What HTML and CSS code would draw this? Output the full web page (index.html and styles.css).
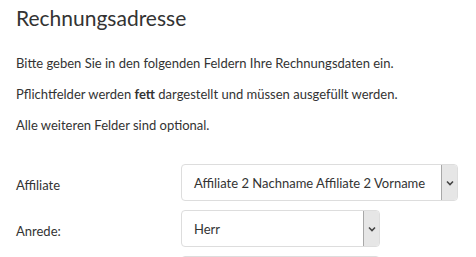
FILE: index.html
```html
<!DOCTYPE html>
<html lang="de">
<head>
<meta charset="utf-8">
<link rel="stylesheet" href="styles.css">
</head>
<body>
<div class="page">
  <h1 class="title">Rechnungsadresse</h1>
  <p class="info">Bitte geben Sie in den folgenden Feldern Ihre Rechnungsdaten ein.</p>
  <p class="info">Pflichtfelder werden <b>fett</b> dargestellt und müssen ausgefüllt werden.</p>
  <p class="info">Alle weiteren Felder sind optional.</p>
  <div class="form">
    <div class="row">
      <label class="label">Affiliate</label>
      <div class="select wide">
        <span class="value">Affiliate 2 Nachname Affiliate 2 Vorname</span>
        <span class="arrow"><svg width="8" height="6" viewBox="0 0 8 6"><polyline points="1,1.5 4,4.5 7,1.5" fill="none" stroke="#444" stroke-width="1.6"/></svg></span>
      </div>
    </div>
    <div class="row">
      <label class="label">Anrede:</label>
      <div class="select narrow">
        <span class="value">Herr</span>
        <span class="arrow"><svg width="8" height="6" viewBox="0 0 8 6"><polyline points="1,1.5 4,4.5 7,1.5" fill="none" stroke="#444" stroke-width="1.6"/></svg></span>
      </div>
    </div>
    <div class="row">
      <label class="label"></label>
      <div class="select narrow"></div>
    </div>
  </div>
</div>
</body>
</html>
```
FILE: styles.css
```css
html, body {
  margin: 0;
  padding: 0;
  background: #fff;
  overflow: hidden;
}
body {
  font-family: Lato, "Open Sans", sans-serif;
  color: #333;
}
.page {
  padding: 0 0 0 16px;
}
.title {
  font-size: 21px;
  font-weight: 400;
  line-height: 30px;
  margin: 3px 0 20px 0;
  color: #333;
}
.info {
  font-size: 13px;
  line-height: 20px;
  margin: 0 0 11px 0;
}
.info b {
  font-weight: 700;
}
.form {
  margin-top: 29px;
  display: flex;
  flex-direction: column;
  gap: 9px;
}
.row {
  display: flex;
  align-items: center;
}
.label {
  width: 165px;
  font-size: 13px;
  padding-top: 4px;
}
.select {
  height: 35px;
  border: 1px solid #ddd;
  border-radius: 4px;
  display: flex;
  align-items: stretch;
  box-sizing: content-box;
  overflow: hidden;
}
.wide { width: 275px; }
.narrow { width: 197px; }
.value {
  flex: 1;
  font-size: 13px;
  padding-left: 12px;
  display: flex;
  align-items: center;
  color: #333;
  white-space: nowrap;
}
.arrow {
  width: 15px;
  background: #e6e6e6;
  border-left: 1px solid #a8a8a8;
  border-top: 1px solid #b8b8b8;
  border-bottom: 1px solid #b8b8b8;
  display: flex;
  align-items: center;
  justify-content: center;
  margin: -1px 0;
}
```
